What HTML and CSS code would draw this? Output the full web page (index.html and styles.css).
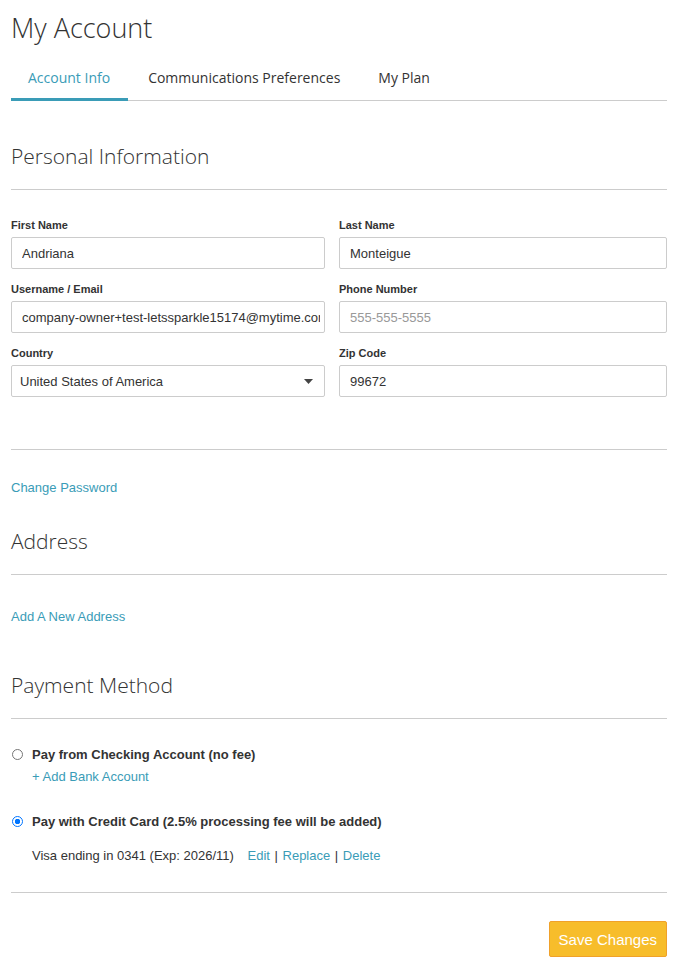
FILE: index.html
```html
<html>

<head>
    <title>My Account</title>
    <link rel="stylesheet" href="styles.css">
</head>

<body>
    <h1 class="pageTitle">My Account</h1>

    <div class="tabs">
        <a class="tab tabActive">Account Info</a>
        <a class="tab">Communications Preferences</a>
        <a class="tab">My Plan</a>
    </div>

    <h2 class="sectionTitle firstSection">Personal Information</h2>
    <div class="formGrid">
        <div class="field">
            <label>First Name</label>
            <input class="textInput" type="text" value="Andriana">
        </div>
        <div class="field">
            <label>Last Name</label>
            <input class="textInput" type="text" value="Monteigue">
        </div>
        <div class="field">
            <label>Username / Email</label>
            <input class="textInput" type="text" value="company-owner+test-letssparkle15174@mytime.com">
        </div>
        <div class="field">
            <label>Phone Number</label>
            <input class="textInput" type="text" placeholder="555-555-5555">
        </div>
        <div class="field">
            <label>Country</label>
            <div class="selectBox">
                <span>United States of America</span>
                <svg width="9" height="5" viewBox="0 0 9 5"><path d="M0 0 H9 L4.5 5 Z" fill="#444" /></svg>
            </div>
        </div>
        <div class="field">
            <label>Zip Code</label>
            <input class="textInput" type="text" value="99672">
        </div>
    </div>

    <hr class="rule ruleLower">
    <a class="link changePassword">Change Password</a>

    <h2 class="sectionTitle">Address</h2>
    <a class="link addAddress">Add A New Address</a>

    <h2 class="sectionTitle">Payment Method</h2>
    <div class="payOption">
        <span class="radio"></span>
        <div>
            <div class="payLabel">Pay from Checking Account (no fee)</div>
            <a class="link addBank">+ Add Bank Account</a>
        </div>
    </div>
    <div class="payOption payCard">
        <span class="radio radioOn"></span>
        <div class="payLabel">Pay with Credit Card (2.5% processing fee will be added)</div>
    </div>
    <div class="cardLine">
        Visa ending in 0341 (Exp: 2026/11)
        <span class="cardActions"><a class="link">Edit</a> | <a class="link">Replace</a> | <a class="link">Delete</a></span>
    </div>

    <hr class="rule ruleBottom">
    <div class="actions">
        <button class="saveButton">Save Changes</button>
    </div>
</body>

</html>
```

FILE: styles.css
```css
body {
    margin: 0;
    padding: 0 13px 0 11px;
    font-family: "Liberation Sans", Arial, sans-serif;
    color: #333;
    background: #fff;
}

.pageTitle {
    font-family: "Open Sans", sans-serif;
    font-weight: 300;
    font-size: 27px;
    color: #333;
    margin: 0;
    padding-top: 11px;
    line-height: 34px;
}

.tabs {
    display: flex;
    margin-top: 23px;
    border-bottom: 1px solid #ccc;
}

.tab {
    font-family: "Open Sans", sans-serif;
    font-size: 14px;
    color: #333;
    padding: 1px 18px 0 17px;
    height: 33px;
    line-height: 18px;
    margin-bottom: -1px;
    border-bottom: 3px solid transparent;
    box-sizing: border-box;
    margin-right: 3px;
}

.tabActive {
    color: #3a9cb7;
    border-bottom-color: #3a9cb7;
}

.sectionTitle {
    font-family: "Open Sans", sans-serif;
    font-weight: 300;
    font-size: 21px;
    color: #333;
    margin: 0;
    line-height: 28px;
    padding-bottom: 19px;
    border-bottom: 1px solid #ccc;
}

.firstSection {
    margin-top: 41px;
}

.formGrid {
    display: grid;
    grid-template-columns: 314px 328px;
    column-gap: 14px;
    row-gap: 14px;
    margin-top: 29px;
}

.field label {
    display: block;
    font-size: 11px;
    font-weight: bold;
    color: #333;
    line-height: 13px;
    margin-bottom: 5px;
}

.textInput,
.selectBox {
    width: 100%;
    height: 32px;
    box-sizing: border-box;
    border: 1px solid #ccc;
    border-radius: 2px;
    padding: 0 4px 0 10px;
    font-family: "Liberation Sans", Arial, sans-serif;
    font-size: 13px;
    color: #333;
    outline: none;
}

.textInput::placeholder {
    color: #999;
}

.selectBox {
    display: flex;
    align-items: center;
    justify-content: space-between;
    padding-right: 11px;
    padding-left: 8px;
}

.rule {
    border: none;
    border-top: 1px solid #ccc;
    margin: 0;
}

.ruleLower {
    margin-top: 52px;
}

.link {
    color: #3a9cb7;
    font-size: 13px;
    text-decoration: none;
    cursor: pointer;
}

.changePassword {
    display: block;
    margin-top: 30px;
    line-height: 16px;
}

.changePassword + .sectionTitle {
    margin-top: 31px;
}

.addAddress {
    display: block;
    margin-top: 34px;
    line-height: 16px;
}

.addAddress + .sectionTitle {
    margin-top: 46px;
}

.payOption {
    display: flex;
    align-items: flex-start;
    margin-top: 28px;
}

.payCard {
    margin-top: 29px;
}

.radio {
    width: 11px;
    height: 11px;
    border: 1px solid #767676;
    border-radius: 50%;
    box-sizing: border-box;
    margin: 2px 9px 0 1px;
    flex-shrink: 0;
}

.radioOn {
    border: 1.5px solid #0075ff;
    background: radial-gradient(circle, #0075ff 0 2.5px, #fff 3px);
}

.payLabel {
    font-size: 13px;
    font-weight: bold;
    color: #333;
    line-height: 16px;
}

.addBank {
    display: block;
    margin-top: 6px;
    line-height: 16px;
}

.cardLine {
    font-size: 13px;
    color: #333;
    margin: 18px 0 0 21px;
    line-height: 16px;
}

.cardActions {
    margin-left: 10px;
    word-spacing: 1px;
}

.ruleBottom {
    margin-top: 28px;
}

.actions {
    display: flex;
    justify-content: flex-end;
    margin-top: 28px;
}

.saveButton {
    background: #f7bd2b;
    border: 1px solid #f0a12a;
    border-radius: 2px;
    color: #fff;
    font-family: "Liberation Sans", Arial, sans-serif;
    font-size: 15px;
    padding: 0 9px;
    height: 36px;
    cursor: pointer;
}
```
